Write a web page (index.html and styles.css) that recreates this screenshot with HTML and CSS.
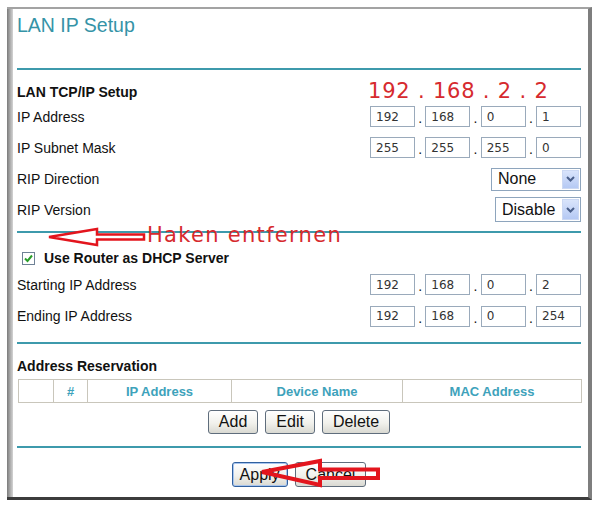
FILE: index.html
```html
<!DOCTYPE html>
<html lang="en">
<head>
<meta charset="utf-8">
<title>LAN IP Setup</title>
<link rel="stylesheet" href="styles.css">
</head>
<body>
<div class="frame">
  <h1 class="title">LAN IP Setup</h1>
  <div class="rule"></div>

  <div class="row row-head">
    <span class="section">LAN TCP/IP Setup</span>
    <span class="note-ip">192 . 168 . 2 . 2</span>
  </div>
  <div class="row">
    <span class="label">IP Address</span>
    <div class="ip">
      <input class="octet" type="text" value="192"><span class="dot">.</span><input class="octet" type="text" value="168"><span class="dot">.</span><input class="octet" type="text" value="0"><span class="dot">.</span><input class="octet" type="text" value="1">
    </div>
  </div>
  <div class="row">
    <span class="label">IP Subnet Mask</span>
    <div class="ip">
      <input class="octet" type="text" value="255"><span class="dot">.</span><input class="octet" type="text" value="255"><span class="dot">.</span><input class="octet" type="text" value="255"><span class="dot">.</span><input class="octet" type="text" value="0">
    </div>
  </div>
  <div class="row row-rip">
    <span class="label">RIP Direction</span>
    <div class="select select-dir">
      <span class="select-value">None</span>
      <span class="select-arrow"><svg width="9" height="6" viewBox="0 0 9 6"><polyline points="1,1 4.5,4.5 8,1" fill="none" stroke="#4a5f8a" stroke-width="2"/></svg></span>
    </div>
  </div>
  <div class="row row-ver">
    <span class="label">RIP Version</span>
    <div class="select select-ver">
      <span class="select-value">Disable</span>
      <span class="select-arrow"><svg width="9" height="6" viewBox="0 0 9 6"><polyline points="1,1 4.5,4.5 8,1" fill="none" stroke="#4a5f8a" stroke-width="2"/></svg></span>
    </div>
  </div>

  <div class="rule rule-dhcp"></div>

  <div class="row row-check">
    <svg class="checkbox" width="13" height="13" viewBox="0 0 13 13"><rect x="0.5" y="0.5" width="12" height="12" fill="#fff" stroke="#6f8296"/><path d="M3 6.5 L5.5 9 L10 3.5" fill="none" stroke="#2a9e2a" stroke-width="2"/></svg>
    <span class="section">Use Router as DHCP Server</span>
  </div>
  <div class="row">
    <span class="label">Starting IP Address</span>
    <div class="ip">
      <input class="octet" type="text" value="192"><span class="dot">.</span><input class="octet" type="text" value="168"><span class="dot">.</span><input class="octet" type="text" value="0"><span class="dot">.</span><input class="octet" type="text" value="2">
    </div>
  </div>
  <div class="row row-end">
    <span class="label">Ending IP Address</span>
    <div class="ip">
      <input class="octet" type="text" value="192"><span class="dot">.</span><input class="octet" type="text" value="168"><span class="dot">.</span><input class="octet" type="text" value="0"><span class="dot">.</span><input class="octet" type="text" value="254">
    </div>
  </div>

  <div class="rule rule-res"></div>

  <div class="row row-res">
    <span class="section">Address Reservation</span>
  </div>
  <table class="reserve">
    <tr>
      <th class="col-sel"></th>
      <th class="col-num">#</th>
      <th class="col-ip">IP Address</th>
      <th class="col-name">Device Name</th>
      <th class="col-mac">MAC Address</th>
    </tr>
  </table>
  <div class="actions">
    <button class="btn" type="button">Add</button>
    <button class="btn" type="button">Edit</button>
    <button class="btn" type="button">Delete</button>
  </div>

  <div class="rule rule-apply"></div>

  <div class="actions actions-apply">
    <button class="btn btn-default" type="button">Apply</button>
    <button class="btn" type="button">Cancel</button>
  </div>

  <!-- red hand-drawn hints laid over the form -->
  <svg class="hint-arrow hint-dhcp" width="104" height="26" viewBox="0 0 104 26">
    <polygon points="5,13 53,5 53,10.5 100,10.5 100,15.5 53,15.5 53,21" fill="#fff" stroke="#e3151d" stroke-width="2.5"/>
  </svg>
  <span class="hint-text">Haken entfernen</span>
  <svg class="hint-arrow hint-apply" width="132" height="36" viewBox="0 0 132 36">
    <polygon points="8,17 66,6 66,14.5 124,14.5 124,23 66,23 66,30" fill="none" stroke="#e3151d" stroke-width="4"/>
  </svg>
</div>
</body>
</html>
```

FILE: styles.css
```css
* {
  box-sizing: border-box;
}

body {
  margin: 0;
  background: #fff;
  font-family: "Liberation Sans", Arial, sans-serif;
  color: #111;
}

/* window frame: shaded left edge, dark bottom edge */
.frame {
  position: relative;
  margin: 7px 0 0 7px;
  width: 585px;
  height: 493px;
  padding: 5px 7px 0 10px;
  border-top: 2px solid #a3a3a3;
  border-right: 4px solid #7e7e7e;
  border-bottom: 3px solid #3c3c3c;
  background: linear-gradient(to right, #7a7a7a 0, #a8a8a8 3px, #d4d4d4 6px, #fff 6px);
}

.title {
  margin: 0;
  height: 54px;
  font-size: 19.5px;
  line-height: 22px;
  font-weight: normal;
  color: #3593a7;
}

.rule {
  height: 2px;
  background: #3d9aac;
}

.rule-dhcp {
  margin-top: 7px;
}

.rule-res {
  margin-top: 10px;
}

.rule-apply {
  margin-top: 12px;
}

.row {
  display: flex;
  align-items: center;
  height: 31px;
  font-size: 14px;
}

.row-head {
  margin-top: 12px;
  height: 19px;
}

.row-rip {
  height: 32px;
}

.row-ver {
  height: 29px;
}

.row-check {
  margin-top: 14px;
  height: 22px;
  padding-left: 5px;
}

.row-end {
  height: 32px;
}

.row-res {
  margin-top: 10px;
  height: 24px;
}

.section {
  font-weight: bold;
  font-size: 14px;
}

.note-ip {
  margin-left: auto;
  width: 213px;
  font-family: "DejaVu Sans", sans-serif;
  font-size: 21px;
  line-height: 19px;
  letter-spacing: 0.8px;
  color: #d62a2e;
  white-space: nowrap;
}

/* four-part address entry */
.ip {
  margin-left: auto;
  display: flex;
}

.octet {
  width: 45px;
  height: 21px;
  margin: 0;
  padding: 0 0 0 5px;
  border: 1px solid #9aaabb;
  font-family: "DejaVu Sans", sans-serif;
  font-size: 12px;
  color: #333;
  background: #fff;
  outline: none;
}

.dot {
  width: 10.33px;
  height: 21px;
  display: flex;
  justify-content: center;
  align-items: flex-end;
  font-size: 14px;
  line-height: 14px;
  padding-bottom: 2px;
}

/* drop-down boxes */
.select {
  margin-left: auto;
  display: flex;
  align-items: stretch;
  height: 23px;
  padding: 1px;
  border: 1px solid #8ea5bd;
  background: #fff;
  font-size: 16px;
}

.select-dir {
  width: 90px;
}

.select-ver {
  width: 86px;
  height: 25px;
}

.select-value {
  flex: 1;
  display: flex;
  align-items: center;
  padding-left: 5px;
}

.select-arrow {
  width: 17px;
  display: flex;
  align-items: center;
  justify-content: center;
  border: 1px solid #cbd8f3;
  background: linear-gradient(#d9e4fb, #b5c9f4);
}

.checkbox {
  margin-right: 9px;
  flex: none;
}

/* reservation list */
.reserve {
  margin: 1px 0 0 1px;
  width: 563px;
  height: 24px;
  border-collapse: collapse;
  table-layout: fixed;
}

.reserve th {
  padding: 0;
  border: 1px solid #c9c6bb;
  color: #3ea2bb;
  font-size: 13px;
  font-weight: bold;
  text-align: center;
}

.col-sel {
  width: 35px;
}

.col-num {
  width: 34px;
}

.col-ip {
  width: 144px;
}

.col-name {
  width: 171px;
}

.col-mac {
  width: 179px;
}

.actions {
  display: flex;
  justify-content: center;
  gap: 7px;
  margin-top: 7px;
  height: 24px;
}

.actions-apply {
  margin-top: 14px;
  height: 25px;
}

.btn {
  height: 100%;
  margin: 0;
  padding: 0 10px;
  font-family: "Liberation Sans", Arial, sans-serif;
  font-size: 16px;
  color: #111;
  border: 1px solid #5f6d7c;
  border-radius: 3px;
  background: linear-gradient(#ffffff, #f1f1ec 55%, #d9d9d2);
}

.btn-default {
  padding: 0 7px;
  border-color: #30609e;
  box-shadow: inset 0 0 0 1px #a8c5ee;
}

/* red annotations */
.hint-arrow {
  position: absolute;
  display: block;
}

.hint-dhcp {
  left: 37px;
  top: 215px;
}

.hint-apply {
  left: 247px;
  top: 446px;
}

.hint-text {
  position: absolute;
  left: 140px;
  top: 216px;
  font-family: "DejaVu Sans", sans-serif;
  font-size: 21px;
  line-height: 21px;
  letter-spacing: 1.3px;
  color: #d62a2e;
  white-space: nowrap;
}
```
